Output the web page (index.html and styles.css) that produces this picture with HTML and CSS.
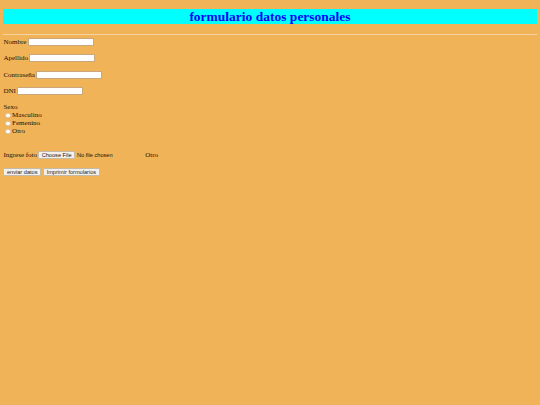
FILE: index.html
```html
<!DOCTYPE html>
<html lang="es">
<head>
<meta charset="utf-8">
<title>formulario datos personales</title>
<link rel="stylesheet" href="styles.css">
</head>
<body class="page">
<h1 class="titulo">formulario datos personales</h1>
<hr class="sep">
<form class="form">
  <div class="campo"><label class="etiqueta">Nombre</label><input class="texto" type="text"></div>
  <div class="campo"><label class="etiqueta">Apellido</label><input class="texto" type="text"></div>
  <div class="campo"><label class="etiqueta">Contraseña</label><input class="texto" type="password"></div>
  <div class="campo"><label class="etiqueta">DNI</label><input class="texto" type="text"></div>
  <div class="sexo">
    <div class="linea">Sexo</div>
    <label class="linea opcion"><input class="radio" type="radio" name="sexo">Masculino</label>
    <label class="linea opcion"><input class="radio" type="radio" name="sexo">Femenino</label>
    <label class="linea opcion"><input class="radio" type="radio" name="sexo">Otro</label>
  </div>
  <div class="campo foto"><label class="etiqueta">Ingrese foto</label><span class="archivo"><span class="btn-archivo">Choose File</span><span class="sin-archivo">No file chosen</span></span><span class="otro">Otro</span></div>
  <div class="campo acciones"><button class="boton" type="button">enviar datos</button><button class="boton" type="button">Imprimir formularios</button></div>
</form>
</body>
</html>
```
FILE: styles.css
```css
html {
  background: #f0b357;
}
.page {
  margin: 0;
  padding: 9px 3.4px 0;
  font-family: "Liberation Serif", "Times New Roman", serif;
  font-size: 7px;
  color: #1a1208;
}
.titulo {
  margin: 0;
  height: 15px;
  line-height: 15px;
  font-size: 13.5px;
  font-weight: bold;
  background: #00ffff;
  color: #0000ff;
  text-align: center;
}
.sep {
  margin: 9.5px 0 2.5px;
  height: 0;
  border: 0;
  border-top: 1px solid #f5d3a0;
}
.form {
  margin: 0;
}
.campo {
  display: flex;
  align-items: center;
  height: 9px;
  margin-bottom: 7.6px;
  white-space: nowrap;
}
.etiqueta {
  margin-right: 1.2px;
}
.texto {
  box-sizing: border-box;
  width: 66px;
  height: 8px;
  margin: 0;
  padding: 0;
  border: 1px solid #c9a77a;
  background: #fff;
}
.sexo {
  margin-top: 0.8px;
}
.linea {
  display: flex;
  align-items: center;
  height: 8px;
}
.opcion {
  padding-left: 2px;
}
.radio {
  appearance: none;
  box-sizing: border-box;
  width: 5.5px;
  height: 5.5px;
  margin: 0 1.2px 0 0;
  border-radius: 50%;
  border: 0.5px solid #d8c6a8;
  background: #fff;
}
.foto {
  margin-top: 15.5px;
}
.archivo {
  display: flex;
  align-items: center;
  width: 105px;
  font-family: "Liberation Sans", Arial, sans-serif;
  font-size: 5.6px;
}
.btn-archivo {
  box-sizing: border-box;
  height: 8px;
  line-height: 7px;
  padding: 0 2.5px;
  background: #f4f1ed;
  border: 1px solid #c5b9a8;
  border-radius: 1px;
  margin-right: 2px;
}
.otro {
  margin-left: 2px;
}
.acciones {
  gap: 2px;
}
.boton {
  box-sizing: border-box;
  height: 8.5px;
  line-height: 6.5px;
  margin: 0;
  padding: 0 2.6px;
  font-family: "Liberation Sans", Arial, sans-serif;
  font-size: 5.6px;
  color: #222;
  background: #f4f1ed;
  border: 1px solid #c5b9a8;
  border-radius: 1px;
}
```
